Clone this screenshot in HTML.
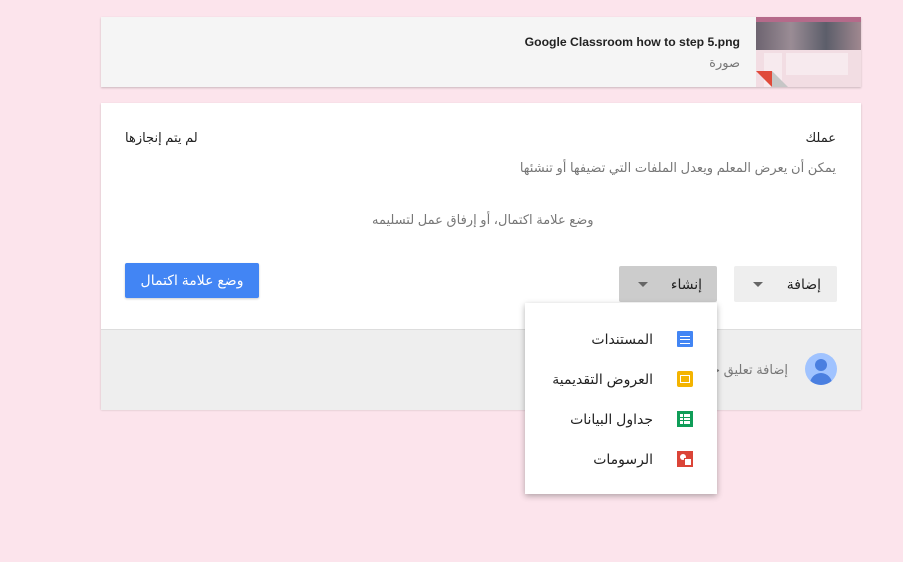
<!DOCTYPE html><html><head><meta charset="utf-8"><style>
body{margin:0;width:903px;height:562px;background:#fce4ec;font-family:"Liberation Sans","DejaVu Sans",sans-serif;position:relative;overflow:hidden}
.a{position:absolute}
.r{direction:rtl;white-space:nowrap}
</style></head><body>
<div class="a" style="left:101px;top:17px;width:760px;height:70px;background:#f5f5f5;box-shadow:0 1px 2px rgba(0,0,0,.2)"></div>
<div class="a" style="left:756px;top:17px;width:105px;height:70px;background:#f2dde3;overflow:hidden">
 <div class="a" style="left:0;top:0;width:105px;height:5px;background:#b56a8a"></div>
 <div class="a" style="left:0;top:5px;width:105px;height:28px;background:linear-gradient(90deg,#6d6470,#9a8c95,#5c5e6a,#a08890)"></div>
 <div class="a" style="left:30px;top:36px;width:62px;height:22px;background:#f7eaee"></div>
 <div class="a" style="left:8px;top:36px;width:18px;height:34px;background:#f7eaee"></div>
 <svg class="a" style="left:0;top:54px" width="32" height="16"><polygon points="0,0 16,0 16,16" fill="#e04a3a"/><polygon points="16,0 32,16 16,16" fill="#c6c6c6"/></svg>
</div>
<div class="a r" style="right:163px;top:35px;font-size:12.2px;font-weight:bold;color:#222;direction:ltr">Google Classroom how to step 5.png</div>
<div class="a r" style="right:163px;top:55px;font-size:13px;color:#777">صورة</div>

<div class="a" style="left:101px;top:103px;width:760px;height:306px;background:#fff;box-shadow:0 1px 2px rgba(0,0,0,.2)"></div>
<div class="a" style="left:101px;top:329px;width:760px;height:80px;background:#eeeeee;border-top:1px solid #ddd"></div>
<div class="a r" style="right:67px;top:130px;font-size:13px;color:#222">عملك</div>
<div class="a r" style="left:125px;top:130px;font-size:13px;color:#222">لم يتم إنجازها</div>
<div class="a r" style="right:67px;top:160px;font-size:13px;color:#777">يمكن أن يعرض المعلم ويعدل الملفات التي تضيفها أو تنشئها</div>
<div class="a r" style="left:372px;top:212px;font-size:13px;color:#777">وضع علامة اكتمال، أو إرفاق عمل لتسليمه</div>
<div class="a r" style="left:125px;top:263px;width:134px;height:35px;background:#4285f4;border-radius:2px;color:#fff;font-size:14px;text-align:center;line-height:35px;box-shadow:0 1px 2px rgba(0,0,0,.2)">وضع علامة اكتمال</div>
<div class="a" style="left:734px;top:266px;width:103px;height:36px;background:#eeeeee;border-radius:2px"></div>
<div class="a r" style="right:82px;top:276px;font-size:14px;color:#222">إضافة</div>
<div class="a" style="left:753px;top:282px;border:5px solid transparent;border-top-color:#666;border-bottom:0"></div>
<div class="a" style="left:619px;top:266px;width:98px;height:36px;background:#cccccc;border-radius:2px"></div>
<div class="a r" style="right:201px;top:276px;font-size:14px;color:#222">إنشاء</div>
<div class="a" style="left:638px;top:282px;border:5px solid transparent;border-top-color:#666;border-bottom:0"></div>

<div class="a" style="left:805px;top:353px;width:32px;height:32px;border-radius:50%;background:#a0c3ff;overflow:hidden">
 <div class="a" style="left:10px;top:6px;width:12px;height:12px;border-radius:50%;background:#4a7fe0"></div>
 <div class="a" style="left:5px;top:20px;width:22px;height:16px;border-radius:11px 11px 0 0;background:#4a7fe0"></div>
</div>
<div class="a r" style="right:115px;top:362px;font-size:13px;color:#777">إضافة تعليق خاص</div>

<div class="a" style="left:525px;top:303px;width:192px;height:191px;background:#fff;box-shadow:0 2px 6px rgba(0,0,0,.3)"></div>
<div class="a" style="left:677px;top:331px;width:16px;height:16px;background:#4285f4;border-radius:1px"><div class="a" style="left:3px;top:5px;width:10px;height:6px;border-top:1px solid #fff;border-bottom:1px solid #fff"></div><div class="a" style="left:3px;top:8px;width:10px;height:1px;background:#fff"></div></div>
<div class="a" style="left:677px;top:371px;width:16px;height:16px;background:#f4b400;border-radius:2px"><div class="a" style="left:3px;top:4px;width:8px;height:6px;border:1px solid #fff;background:#f4b400"></div></div>
<div class="a" style="left:677px;top:411px;width:16px;height:16px;background:#0f9d58"><div class="a" style="left:3px;top:3px;width:10px;height:10px;background:linear-gradient(#0f9d58,#0f9d58) 3px 0/1px 10px no-repeat,linear-gradient(#0f9d58,#0f9d58) 0 3px/10px 1px no-repeat,linear-gradient(#0f9d58,#0f9d58) 0 6px/10px 1px no-repeat,#fff"></div></div>
<div class="a" style="left:677px;top:451px;width:16px;height:16px;background:#db4437"><div class="a" style="left:3px;top:3px;width:6px;height:6px;border-radius:50%;background:#fff"></div><div class="a" style="left:7px;top:7px;width:6px;height:6px;background:#fff;border:1px solid #db4437"></div></div>
<div class="a r" style="right:250px;top:331px;font-size:14px;color:#222">المستندات</div>
<div class="a r" style="right:250px;top:371px;font-size:14px;color:#222">العروض التقديمية</div>
<div class="a r" style="right:250px;top:411px;font-size:14px;color:#222">جداول البيانات</div>
<div class="a r" style="right:250px;top:451px;font-size:14px;color:#222">الرسومات</div>
</body></html>
